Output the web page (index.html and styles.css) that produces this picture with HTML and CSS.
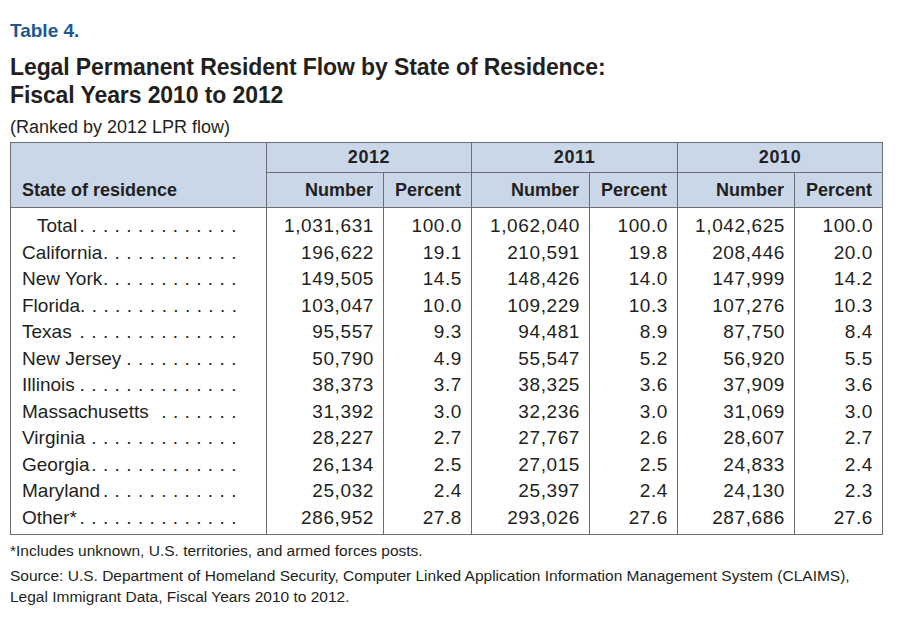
FILE: index.html
```html
<!DOCTYPE html>
<html lang="en">
<head>
<meta charset="utf-8">
<title>Table 4. Legal Permanent Resident Flow by State of Residence</title>
<link rel="stylesheet" href="styles.css">
</head>
<body>
<div class="page">
  <div class="label">Table 4.</div>
  <h1 class="title">Legal Permanent Resident Flow by State of Residence:<br>Fiscal Years 2010 to 2012</h1>
  <div class="subtitle">(Ranked by 2012 LPR flow)</div>
  <table class="data">
    <colgroup>
      <col class="c-state"><col class="c-num"><col class="c-pct"><col class="c-num2"><col class="c-pct"><col class="c-num"><col class="c-pct">
    </colgroup>
    <thead>
      <tr class="h1">
        <th class="state-h" rowspan="2">State of residence</th>
        <th class="year" colspan="2">2012</th>
        <th class="year" colspan="2">2011</th>
        <th class="year" colspan="2">2010</th>
      </tr>
      <tr class="h2">
        <th class="sub">Number</th><th class="sub">Percent</th>
        <th class="sub">Number</th><th class="sub">Percent</th>
        <th class="sub">Number</th><th class="sub">Percent</th>
      </tr>
    </thead>
    <tbody>
      <tr class="first"><td class="state"><div class="lead"><span class="name indent">Total</span><span class="dots">. . . . . . . . . . . . . .</span></div></td><td>1,031,631</td><td>100.0</td><td>1,062,040</td><td>100.0</td><td>1,042,625</td><td>100.0</td></tr>
      <tr><td class="state"><div class="lead"><span class="name">California</span><span class="dots">. . . . . . . . . . . .</span></div></td><td>196,622</td><td>19.1</td><td>210,591</td><td>19.8</td><td>208,446</td><td>20.0</td></tr>
      <tr><td class="state"><div class="lead"><span class="name">New York</span><span class="dots">. . . . . . . . . . . .</span></div></td><td>149,505</td><td>14.5</td><td>148,426</td><td>14.0</td><td>147,999</td><td>14.2</td></tr>
      <tr><td class="state"><div class="lead"><span class="name">Florida</span><span class="dots">. . . . . . . . . . . . . .</span></div></td><td>103,047</td><td>10.0</td><td>109,229</td><td>10.3</td><td>107,276</td><td>10.3</td></tr>
      <tr><td class="state"><div class="lead"><span class="name">Texas</span><span class="dots">. . . . . . . . . . . . . .</span></div></td><td>95,557</td><td>9.3</td><td>94,481</td><td>8.9</td><td>87,750</td><td>8.4</td></tr>
      <tr><td class="state"><div class="lead"><span class="name">New Jersey</span><span class="dots">. . . . . . . . . .</span></div></td><td>50,790</td><td>4.9</td><td>55,547</td><td>5.2</td><td>56,920</td><td>5.5</td></tr>
      <tr><td class="state"><div class="lead"><span class="name">Illinois</span><span class="dots">. . . . . . . . . . . . . .</span></div></td><td>38,373</td><td>3.7</td><td>38,325</td><td>3.6</td><td>37,909</td><td>3.6</td></tr>
      <tr><td class="state"><div class="lead"><span class="name">Massachusetts</span><span class="dots">. . . . . . .</span></div></td><td>31,392</td><td>3.0</td><td>32,236</td><td>3.0</td><td>31,069</td><td>3.0</td></tr>
      <tr><td class="state"><div class="lead"><span class="name">Virginia</span><span class="dots">. . . . . . . . . . . . .</span></div></td><td>28,227</td><td>2.7</td><td>27,767</td><td>2.6</td><td>28,607</td><td>2.7</td></tr>
      <tr><td class="state"><div class="lead"><span class="name">Georgia</span><span class="dots">. . . . . . . . . . . . .</span></div></td><td>26,134</td><td>2.5</td><td>27,015</td><td>2.5</td><td>24,833</td><td>2.4</td></tr>
      <tr><td class="state"><div class="lead"><span class="name">Maryland</span><span class="dots">. . . . . . . . . . . .</span></div></td><td>25,032</td><td>2.4</td><td>25,397</td><td>2.4</td><td>24,130</td><td>2.3</td></tr>
      <tr class="last"><td class="state"><div class="lead"><span class="name">Other*</span><span class="dots">. . . . . . . . . . . . . .</span></div></td><td>286,952</td><td>27.8</td><td>293,026</td><td>27.6</td><td>287,686</td><td>27.6</td></tr>
    </tbody>
  </table>
  <p class="note">*Includes unknown, U.S. territories, and armed forces posts.</p>
  <p class="source">Source: U.S. Department of Homeland Security, Computer Linked Application Information Management System (CLAIMS),<br>Legal Immigrant Data, Fiscal Years 2010 to 2012.</p>
</div>
</body>
</html>
```

FILE: styles.css
```css
html, body {
  margin: 0;
  padding: 0;
  background: #ffffff;
}
body {
  font-family: "Liberation Sans", Arial, sans-serif;
  color: #231f20;
}
.page {
  padding: 20px 0 0 10px;
  width: 872px;
}
.label {
  font-weight: bold;
  font-size: 19px;
  line-height: 22px;
  color: #1d5892;
  margin: 0 0 11px 0;
}
.title {
  font-weight: bold;
  font-size: 23px;
  line-height: 28px;
  margin: 0;
  letter-spacing: -0.1px;
}
.subtitle {
  font-size: 18px;
  line-height: 22px;
  margin: 7px 0 4px 0;
}
.data {
  border-collapse: collapse;
  table-layout: fixed;
  width: 872px;
  border: 1.5px solid #6d6e71;
}
.c-state { width: 256px; }
.c-num { width: 117px; }
.c-num2 { width: 118px; }
.c-pct { width: 88px; }
.data thead th {
  background: #cad7e9;
  font-weight: bold;
  font-size: 18px;
  color: #231f20;
  border: 1px solid #6d6e71;
}
.h1 th { height: 29px; padding: 0; }
.h2 th { height: 34px; padding: 0 10px 0 0; }
.year {
  text-align: center;
  font-size: 19px;
  letter-spacing: 0.6px;
  vertical-align: middle;
}
.state-h {
  text-align: left;
  vertical-align: bottom;
  padding: 0 0 6px 11px !important;
}
.sub {
  text-align: right;
  vertical-align: middle;
}
.data tbody td {
  font-size: 19px;
  line-height: 26.5px;
  height: 26.5px;
  padding: 0 9px 0 0;
  text-align: right;
  letter-spacing: 0.6px;
  border-left: 1px solid #6d6e71;
  border-right: 1px solid #6d6e71;
  white-space: nowrap;
  vertical-align: middle;
}
.data tbody tr.first td { padding-top: 5px; }
.data tbody tr.last td { padding-bottom: 3px; }
.data tbody td.state {
  text-align: left;
  letter-spacing: 0;
  padding: 0 29px 0 11px;
}
.data tbody tr.first td.state { padding-top: 5px; }
.data tbody tr.last td.state { padding-bottom: 3px; }
.lead {
  display: flex;
  justify-content: space-between;
  align-items: baseline;
}
.lead .name {
  flex: none;
}
.lead .name.indent { padding-left: 15px; }
.lead .dots {
  flex: none;
  letter-spacing: 0.55px;
  white-space: nowrap;
}
.note {
  font-size: 15.5px;
  line-height: 20px;
  margin: 6px 0 0 0;
}
.source {
  font-size: 15.5px;
  line-height: 21px;
  margin: 4px 0 0 0;
}
```
